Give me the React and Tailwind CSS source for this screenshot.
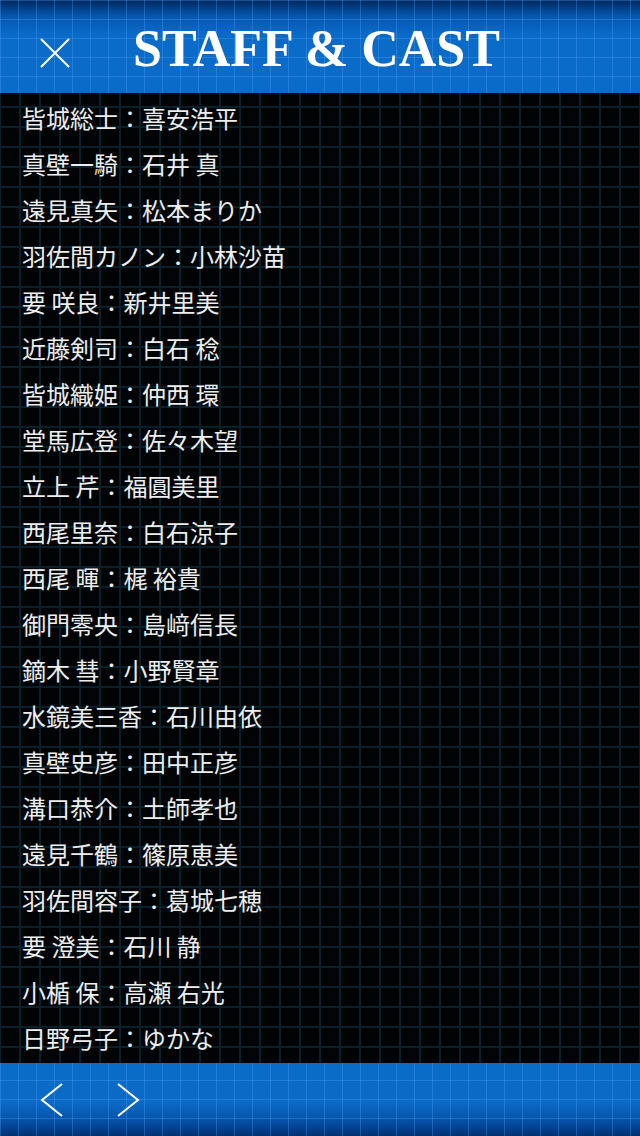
import React from "react";

const cast = [
  ["皆城総士", "喜安浩平"],
  ["真壁一騎", "石井 真"],
  ["遠見真矢", "松本まりか"],
  ["羽佐間カノン", "小林沙苗"],
  ["要 咲良", "新井里美"],
  ["近藤剣司", "白石 稔"],
  ["皆城織姫", "仲西 環"],
  ["堂馬広登", "佐々木望"],
  ["立上 芹", "福圓美里"],
  ["西尾里奈", "白石涼子"],
  ["西尾 暉", "梶 裕貴"],
  ["御門零央", "島﨑信長"],
  ["鏑木 彗", "小野賢章"],
  ["水鏡美三香", "石川由依"],
  ["真壁史彦", "田中正彦"],
  ["溝口恭介", "土師孝也"],
  ["遠見千鶴", "篠原恵美"],
  ["羽佐間容子", "葛城七穂"],
  ["要 澄美", "石川 静"],
  ["小楯 保", "高瀬 右光"],
  ["日野弓子", "ゆかな"],
];

export default function App() {
  return (
    <div className="w-[640px] h-[1136px] flex flex-col bg-black overflow-hidden">
      {/* header bar */}
      <div className="relative h-[93px] flex items-center bg-[linear-gradient(to_bottom,#01265c_0px,#0656b0_16px,#0a6ac8_34px,#0a6cc8_100%)]">
        <div className="absolute inset-0 bg-[linear-gradient(to_right,rgba(90,170,255,0.3)_1px,transparent_1px),linear-gradient(to_bottom,rgba(90,170,255,0.3)_1px,transparent_1px)] bg-[size:18px_19px] bg-[position:0px_0px]" />
        <button className="relative w-[110px] h-full flex items-center justify-center pt-[12px]">
          <svg width="32" height="32" viewBox="0 0 32 32" fill="none">
            <path d="M2 2 L30 30 M30 2 L2 30" stroke="white" strokeWidth="2" />
          </svg>
        </button>
        <h1 className="relative ml-[23px] mt-[5px] text-white text-[52px] leading-none font-bold font-['Liberation_Serif',serif]">
          STAFF &amp; CAST
        </h1>
      </div>

      {/* cast list */}
      <div className="relative flex-1 bg-[#020305]">
        <div className="absolute inset-0 bg-[linear-gradient(to_right,#07202a_2px,transparent_2px),linear-gradient(to_bottom,#07202a_2px,transparent_2px)] bg-[size:20px_20px] bg-[position:-1px_13px]" />
        <ul className="relative pt-[2px] pl-[22px] flex flex-col">
          {cast.map(([role, actor]) => (
            <li
              key={role}
              className="h-[46px] flex items-center text-[24px] text-[#eeeeee] whitespace-pre font-['Noto_Sans_CJK_JP',sans-serif]"
            >
              <span>{role}</span>
              <span className="w-[24px] text-center">：</span>
              <span>{actor}</span>
            </li>
          ))}
        </ul>
      </div>

      {/* footer nav */}
      <div className="relative h-[73px] flex items-center bg-[linear-gradient(to_bottom,#0a6cc8_0%,#0a6ac6_55%,#0550a6_80%,#023070_100%)]">
        <div className="absolute inset-0 bg-[linear-gradient(to_right,rgba(90,170,255,0.3)_1px,transparent_1px),linear-gradient(to_bottom,rgba(90,170,255,0.3)_1px,transparent_1px)] bg-[size:18px_19px] bg-[position:0px_-2px]" />
        <div className="relative flex items-center gap-[52px] pl-[40px]">
          <svg width="24" height="34" viewBox="0 0 24 34" fill="none">
            <path d="M22 1 L2 17 L22 33" stroke="white" strokeWidth="2" />
          </svg>
          <svg width="24" height="34" viewBox="0 0 24 34" fill="none">
            <path d="M2 1 L22 17 L2 33" stroke="white" strokeWidth="2" />
          </svg>
        </div>
      </div>
    </div>
  );
}
